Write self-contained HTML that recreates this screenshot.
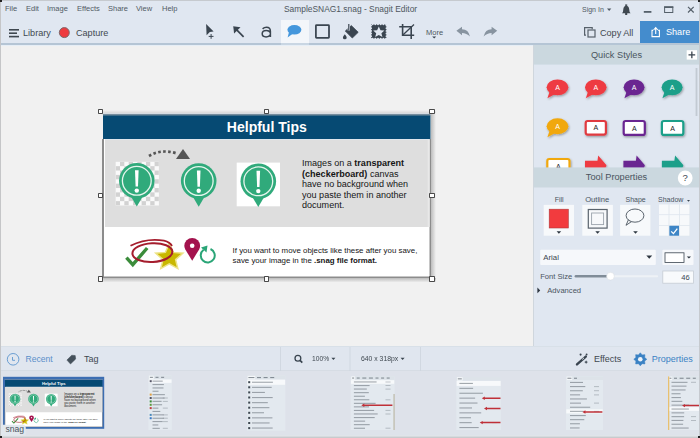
<!DOCTYPE html>
<html><head><meta charset="utf-8">
<style>
*{margin:0;padding:0;box-sizing:border-box}
html,body{width:700px;height:438px;overflow:hidden;background:#f1f1f1;font-family:"Liberation Sans",sans-serif;color:#3d4650}
.a{position:absolute}
.t{position:absolute;white-space:nowrap;line-height:1}
#top{left:0;top:0;width:700px;height:45px;background:#e0e7f1;border-bottom:2px solid #b5c5d5}
.menu{font-size:7.5px;color:#505a64;top:5px}
#canvas{left:0;top:45px;width:533px;height:301px;background:#f1f1f1;border-top:1px solid #e6eef6}
#panel{left:533px;top:45px;width:167px;height:301px;background:#e0e7f1;border-left:1px solid #cfd6dd}
#tray{left:0;top:346px;width:700px;height:25px;background:#e0e6ef;border-top:1px solid #d8e0e8;border-bottom:1px solid #d6dce4}
#thumbs{left:0;top:371px;width:700px;height:67px;background:#dee2ea}
.handle{position:absolute;width:5.6px;height:5.6px;background:#fff;border:1px solid #4a4a4a;border-radius:0.8px}
</style></head><body>
<div id="top" class="a">
  <div class="a" style="left:0;top:0;width:700px;height:1px;background:#c6cacf"></div>
  <span class="t menu" style="left:5px">File</span>
  <span class="t menu" style="left:26px">Edit</span>
  <span class="t menu" style="left:47px">Image</span>
  <span class="t menu" style="left:77px">Effects</span>
  <span class="t menu" style="left:108px">Share</span>
  <span class="t menu" style="left:136px">View</span>
  <span class="t menu" style="left:162px">Help</span>
  <span class="t" style="left:284px;top:5px;font-size:8.42px;color:#4e5760">SampleSNAG1.snag - Snagit Editor</span>
  <span class="t" style="left:582px;top:6px;font-size:7px;color:#505a64">Sign In</span>
  <div class="a" style="left:280.5px;top:19.5px;width:28.5px;height:25.5px;background:#f3f6fa"></div>
  <div class="a" style="left:640px;top:21px;width:60px;height:22px;background:#448ccd"></div>
  <div class="a" style="left:280.5px;top:43px;width:28.5px;height:2px;background:#c9d6e3"></div>
  <span class="t" style="left:23px;top:29px;font-size:9.1px;color:#3f4850">Library</span>
  <span class="t" style="left:76px;top:29px;font-size:9.1px;color:#3f4850">Capture</span>
  <span class="t" style="left:600px;top:29px;font-size:9.1px;color:#3f4850">Copy All</span>
  <span class="t" style="left:666px;top:28px;font-size:9.1px;color:#fff">Share</span>
  <span class="t" style="left:426px;top:29px;font-size:7.5px;color:#4e5760">More</span>
  <svg class="a" style="left:0;top:0" width="700" height="44" viewBox="0 0 700 44">
    <g fill="#3f4850">
      <rect x="9" y="29" width="10" height="1.6"/><rect x="9" y="32.4" width="8" height="1.6"/><rect x="9" y="35.8" width="10" height="1.6"/>
    </g>
    <circle cx="64.3" cy="32.6" r="5" fill="#ee3b3f" stroke="#7c6a6c" stroke-width="1"/>
    <!-- select -->
    <path d="M206.1 24.1 L213.6 31.5 L209.8 32 L206.6 35.2 Z" fill="#3a4550"/>
    <path d="M211.1 34 v4.8 M208.7 36.4 h4.8" stroke="#3a4550" stroke-width="1"/>
    <!-- arrow -->
    <path d="M243.6 36.8 L235 28.2" stroke="#3a4550" stroke-width="1.7"/>
    <path d="M233.2 26.3 L240.5 27.2 L234.1 33.6 Z" fill="#3a4550"/>
    <!-- a -->
    <path d="M262.6 28.9 Q264.3 27.2 266.5 27.2 Q270.4 27.2 270.4 31.2 V37 M270.4 32.6 Q269.2 30.6 266.3 30.6 Q262.2 30.6 262.2 33.8 Q262.2 36.9 266.1 36.9 Q269 36.9 270.4 34.6" fill="none" stroke="#3a4550" stroke-width="1.5"/>
    <!-- bubble -->
    <ellipse cx="294.4" cy="29.8" rx="7" ry="4.8" fill="#4597dc"/>
    <path d="M289 32 L287.6 37.6 L293 33.5 Z" fill="#4597dc"/>
    <!-- rect -->
    <rect x="315.9" y="25.1" width="13.1" height="12.8" rx="0.6" fill="none" stroke="#3a4550" stroke-width="1.75"/>
    <!-- bucket -->
    <path d="M351.3 25.6 L358.2 32.3 L352.3 38 L345.3 31 Z" fill="#3a4550" stroke="#3a4550" stroke-width="0.8" stroke-linejoin="round"/>
    <path d="M348.8 24 V30.5" stroke="#e0e7f1" stroke-width="2.4"/>
    <path d="M348.8 24 V30.5" stroke="#3a4550" stroke-width="1.2"/>
    <path d="M344.8 34.2 Q342.8 36.6 342.9 37.4 A1.9 1.9 0 0 0 346.7 37.4 Q346.8 36.6 344.8 34.2 Z" fill="#3a4550"/>
    <!-- stamp -->
    <rect x="371.1" y="24.3" width="15.4" height="14.4" fill="#3a4550"/>
    <g fill="#e0e7f1"><circle cx="372.6" cy="24.3" r="0.95"/><circle cx="372.6" cy="38.7" r="0.95"/><circle cx="375.3" cy="24.3" r="0.95"/><circle cx="375.3" cy="38.7" r="0.95"/><circle cx="378.0" cy="24.3" r="0.95"/><circle cx="378.0" cy="38.7" r="0.95"/><circle cx="380.7" cy="24.3" r="0.95"/><circle cx="380.7" cy="38.7" r="0.95"/><circle cx="383.4" cy="24.3" r="0.95"/><circle cx="383.4" cy="38.7" r="0.95"/><circle cx="386.1" cy="24.3" r="0.95"/><circle cx="386.1" cy="38.7" r="0.95"/><circle cx="371.1" cy="25.6" r="0.95"/><circle cx="386.5" cy="25.6" r="0.95"/><circle cx="371.1" cy="28.2" r="0.95"/><circle cx="386.5" cy="28.2" r="0.95"/><circle cx="371.1" cy="30.9" r="0.95"/><circle cx="386.5" cy="30.9" r="0.95"/><circle cx="371.1" cy="33.5" r="0.95"/><circle cx="386.5" cy="33.5" r="0.95"/><circle cx="371.1" cy="36.2" r="0.95"/><circle cx="386.5" cy="36.2" r="0.95"/><circle cx="371.1" cy="38.9" r="0.95"/><circle cx="386.5" cy="38.9" r="0.95"/></g>
    <path d="M378.8 26.6 L380.5 30.3 L384.4 30.6 L381.4 33.2 L382.4 37 L378.8 35 L375.2 37 L376.2 33.2 L373.2 30.6 L377.1 30.3 Z" fill="#e0e7f1"/>
    <!-- crop -->
    <path d="M402.6 24 V35.3 H414.2 M399.2 26.8 H411.2 V39" fill="none" stroke="#3a4550" stroke-width="1.6"/>
    <path d="M402.6 35.3 L414 24.5" stroke="#3a4550" stroke-width="1.3"/>
    <path d="M432.2 36.4 h4 l-2 2 z" fill="#3a4550"/>
    <!-- undo / redo -->
    <path d="M456.4 30.8 L462 26.8 L462 29.2 Q468.5 29.2 470 36.6 Q466.5 33 462 33 L462 35.2 Z" fill="#8894a0"/>
    <path d="M497.2 30.8 L491.6 26.8 L491.6 29.2 Q485.1 29.2 483.6 36.6 Q487.1 33 491.6 33 L491.6 35.2 Z" fill="#8894a0"/>
    <!-- sign in arrow -->
    <path d="M607 8.6 h4.3 l-2.15 2.3 z" fill="#505a64"/>
    <!-- bell -->
    <path d="M622 13.2 Q623.3 12 623.3 9.2 Q623.6 5.8 626.2 5.4 Q628.9 5.8 629.2 9.2 Q629.2 12 630.6 13.2 Z" fill="#3f4850"/>
    <rect x="625.2" y="4.4" width="2" height="1.5" fill="#3f4850"/>
    <circle cx="626.2" cy="13.9" r="1.2" fill="#3f4850"/>
    <!-- window controls -->
    <rect x="643.8" y="11" width="7.6" height="1.8" fill="#55606a"/>
    <rect x="664.6" y="6.9" width="8.2" height="5.6" fill="none" stroke="#55606a" stroke-width="1"/>
    <rect x="664.1" y="6.4" width="9.2" height="1.6" fill="#55606a"/>
    <path d="M688 6.9 L693.7 12.5 M693.7 6.9 L688 12.5" stroke="#55606a" stroke-width="1.2"/>
    <!-- copy icon -->
    <path d="M586 35.2 H584.6 V27.6 H592.2 V29.2" fill="none" stroke="#57616b" stroke-width="1.2"/>
    <rect x="588" y="30" width="7" height="7" fill="none" stroke="#57616b" stroke-width="1.2"/>
    <!-- share icon -->
    <path d="M653.2 30.4 H652 V36.6 H659.4 V30.4 H658.2" fill="none" stroke="#fff" stroke-width="1.1"/>
    <path d="M655.7 34 V28 M653.6 30 L655.7 27.6 L657.8 30" fill="none" stroke="#fff" stroke-width="1.1"/>
  </svg>
</div>
<div id="canvas" class="a">
  <svg class="a" style="left:0;top:-46px" width="533" height="346" viewBox="0 0 533 346">
    <defs>
      <linearGradient id="shR" x1="0" x2="1" y1="0" y2="0"><stop offset="0" stop-color="#000" stop-opacity="0.22"/><stop offset="1" stop-color="#000" stop-opacity="0"/></linearGradient>
      <linearGradient id="shB" x1="0" x2="0" y1="0" y2="1"><stop offset="0" stop-color="#000" stop-opacity="0.22"/><stop offset="1" stop-color="#000" stop-opacity="0"/></linearGradient>
      <clipPath id="chk"><rect x="115.7" y="161.8" width="43.2" height="43.7"/></clipPath>
    </defs>
    <linearGradient id="shT" x1="0" x2="0" y1="0" y2="1"><stop offset="0" stop-color="#000" stop-opacity="0"/><stop offset="1" stop-color="#000" stop-opacity="0.1"/></linearGradient>
    <rect x="431" y="114" width="5" height="166" fill="url(#shR)"/>
    <rect x="102" y="278" width="334" height="4.5" fill="url(#shB)"/>
    <rect x="98" y="110" width="338" height="3" fill="url(#shT)"/>
    <g id="snagimg">
    <rect x="102" y="139" width="329" height="139" fill="#8c8c8c"/>
    <rect x="104" y="139" width="325.5" height="137.5" fill="#ffffff"/>
    <rect x="102" y="113" width="329" height="1.5" fill="#d6dce2"/>
    <rect x="103" y="114.5" width="327.5" height="1" fill="#0b3452"/>
    <rect x="103" y="115.5" width="327.5" height="23.5" fill="#064a73"/>
    <rect x="105" y="139" width="324.5" height="1" fill="#dfe6ec"/>
    <rect x="105" y="140" width="324.5" height="87" fill="#dedede"/>
    <rect x="427.7" y="140" width="1.8" height="87" fill="#e8e8e8"/>
    <text x="266.8" y="132" text-anchor="middle" font-family="Liberation Sans" font-weight="bold" font-size="14" fill="#fff">Helpful Tips</text>
    <rect x="115.7" y="161.8" width="43.2" height="43.7" fill="#fafafa"/>
    <g clip-path="url(#chk)"><rect x="115.70" y="166.17" width="4.32" height="4.37" fill="#d2d2d2"/><rect x="115.70" y="174.91" width="4.32" height="4.37" fill="#d2d2d2"/><rect x="115.70" y="183.65" width="4.32" height="4.37" fill="#d2d2d2"/><rect x="115.70" y="192.39" width="4.32" height="4.37" fill="#d2d2d2"/><rect x="115.70" y="201.13" width="4.32" height="4.37" fill="#d2d2d2"/><rect x="120.02" y="161.80" width="4.32" height="4.37" fill="#d2d2d2"/><rect x="120.02" y="170.54" width="4.32" height="4.37" fill="#d2d2d2"/><rect x="120.02" y="179.28" width="4.32" height="4.37" fill="#d2d2d2"/><rect x="120.02" y="188.02" width="4.32" height="4.37" fill="#d2d2d2"/><rect x="120.02" y="196.76" width="4.32" height="4.37" fill="#d2d2d2"/><rect x="124.34" y="166.17" width="4.32" height="4.37" fill="#d2d2d2"/><rect x="124.34" y="174.91" width="4.32" height="4.37" fill="#d2d2d2"/><rect x="124.34" y="183.65" width="4.32" height="4.37" fill="#d2d2d2"/><rect x="124.34" y="192.39" width="4.32" height="4.37" fill="#d2d2d2"/><rect x="124.34" y="201.13" width="4.32" height="4.37" fill="#d2d2d2"/><rect x="128.66" y="161.80" width="4.32" height="4.37" fill="#d2d2d2"/><rect x="128.66" y="170.54" width="4.32" height="4.37" fill="#d2d2d2"/><rect x="128.66" y="179.28" width="4.32" height="4.37" fill="#d2d2d2"/><rect x="128.66" y="188.02" width="4.32" height="4.37" fill="#d2d2d2"/><rect x="128.66" y="196.76" width="4.32" height="4.37" fill="#d2d2d2"/><rect x="132.98" y="166.17" width="4.32" height="4.37" fill="#d2d2d2"/><rect x="132.98" y="174.91" width="4.32" height="4.37" fill="#d2d2d2"/><rect x="132.98" y="183.65" width="4.32" height="4.37" fill="#d2d2d2"/><rect x="132.98" y="192.39" width="4.32" height="4.37" fill="#d2d2d2"/><rect x="132.98" y="201.13" width="4.32" height="4.37" fill="#d2d2d2"/><rect x="137.30" y="161.80" width="4.32" height="4.37" fill="#d2d2d2"/><rect x="137.30" y="170.54" width="4.32" height="4.37" fill="#d2d2d2"/><rect x="137.30" y="179.28" width="4.32" height="4.37" fill="#d2d2d2"/><rect x="137.30" y="188.02" width="4.32" height="4.37" fill="#d2d2d2"/><rect x="137.30" y="196.76" width="4.32" height="4.37" fill="#d2d2d2"/><rect x="141.62" y="166.17" width="4.32" height="4.37" fill="#d2d2d2"/><rect x="141.62" y="174.91" width="4.32" height="4.37" fill="#d2d2d2"/><rect x="141.62" y="183.65" width="4.32" height="4.37" fill="#d2d2d2"/><rect x="141.62" y="192.39" width="4.32" height="4.37" fill="#d2d2d2"/><rect x="141.62" y="201.13" width="4.32" height="4.37" fill="#d2d2d2"/><rect x="145.94" y="161.80" width="4.32" height="4.37" fill="#d2d2d2"/><rect x="145.94" y="170.54" width="4.32" height="4.37" fill="#d2d2d2"/><rect x="145.94" y="179.28" width="4.32" height="4.37" fill="#d2d2d2"/><rect x="145.94" y="188.02" width="4.32" height="4.37" fill="#d2d2d2"/><rect x="145.94" y="196.76" width="4.32" height="4.37" fill="#d2d2d2"/><rect x="150.26" y="166.17" width="4.32" height="4.37" fill="#d2d2d2"/><rect x="150.26" y="174.91" width="4.32" height="4.37" fill="#d2d2d2"/><rect x="150.26" y="183.65" width="4.32" height="4.37" fill="#d2d2d2"/><rect x="150.26" y="192.39" width="4.32" height="4.37" fill="#d2d2d2"/><rect x="150.26" y="201.13" width="4.32" height="4.37" fill="#d2d2d2"/><rect x="154.58" y="161.80" width="4.32" height="4.37" fill="#d2d2d2"/><rect x="154.58" y="170.54" width="4.32" height="4.37" fill="#d2d2d2"/><rect x="154.58" y="179.28" width="4.32" height="4.37" fill="#d2d2d2"/><rect x="154.58" y="188.02" width="4.32" height="4.37" fill="#d2d2d2"/><rect x="154.58" y="196.76" width="4.32" height="4.37" fill="#d2d2d2"/></g>
    <rect x="236.7" y="162.6" width="43.3" height="43.7" fill="#fff"/>
    <g transform="translate(136.8 180.8)">
      <path d="M-6 15.5 L0 25.8 L6 15.5 Z" fill="#30aa7b"/>
      <circle r="17.8" fill="#30aa7b"/>
      <circle r="14.4" fill="none" stroke="#e6f5ed" stroke-width="1.3"/>
      <path d="M-1.8 -10.6 H1.8 L1.2 5.8 H-1.2 Z" fill="#fff"/>
      <circle cy="9.8" r="2.2" fill="#fff"/>
    </g>
    <g transform="translate(198.7 181.0)">
      <path d="M-6 15.5 L0 25.8 L6 15.5 Z" fill="#30aa7b"/>
      <circle r="17.8" fill="#30aa7b"/>
      <circle r="14.4" fill="none" stroke="#e6f5ed" stroke-width="1.3"/>
      <path d="M-1.8 -10.6 H1.8 L1.2 5.8 H-1.2 Z" fill="#fff"/>
      <circle cy="9.8" r="2.2" fill="#fff"/>
    </g>
    <g transform="translate(258.3 181.3)">
      <path d="M-6 15.5 L0 25.8 L6 15.5 Z" fill="#30aa7b"/>
      <circle r="17.8" fill="#30aa7b"/>
      <circle r="14.4" fill="none" stroke="#e6f5ed" stroke-width="1.3"/>
      <path d="M-1.8 -10.6 H1.8 L1.2 5.8 H-1.2 Z" fill="#fff"/>
      <circle cy="9.8" r="2.2" fill="#fff"/>
    </g>
    <path d="M149 156 Q161 148.5 177 153.5" fill="none" stroke="#555" stroke-width="2.7" stroke-dasharray="2.6 2.4"/>
    <path d="M176 159 L183 149 L190 159 Z" fill="#555"/>
    <text font-family="Liberation Sans" font-size="9.05" fill="#161616">
      <tspan x="302" y="166">Images on a <tspan font-weight="bold">transparent</tspan></tspan>
      <tspan x="302" y="176.6"><tspan font-weight="bold">(checkerboard)</tspan> canvas</tspan>
      <tspan x="302" y="187.2">have no background when</tspan>
      <tspan x="302" y="197.8">you paste them in another</tspan>
      <tspan x="302" y="208.4">document.</tspan>
    </text>
    <text font-family="Liberation Sans" font-size="7.88" fill="#161616">
      <tspan x="232.6" y="253">If you want to move objects like these after you save,</tspan>
      <tspan x="232.6" y="262.6">save your image in the <tspan font-weight="bold">.snag file format.</tspan></tspan>
    </text>
    <!-- star -->
    <path d="M169.3 243.6 L173.2 252.4 L182.9 253.2 L175.6 259.6 L177.8 268.6 L169.3 263.8 L160.8 268.6 L163 259.6 L155.7 253.2 L165.4 252.4 Z" fill="#c9b800" stroke="#ede488" stroke-width="1.5"/>
    <!-- check -->
    <path d="M126.4 257.6 L132.8 264.6 L147.2 248" fill="none" stroke="#3b8c3b" stroke-width="3.4"/>
    <!-- red ellipse -->
    <ellipse cx="152.4" cy="252.6" rx="20" ry="9.4" transform="rotate(-3 152.4 252.6)" fill="none" stroke="#a51d2d" stroke-width="2"/>
    <path d="M130.5 245.8 Q146 237.8 164 240.6 Q170 242 172 246" fill="none" stroke="#a51d2d" stroke-width="1.8"/>
    <!-- magenta pin -->
    <path d="M192.2 260.7 L185.3 249.5 Q184.3 247.5 184.3 245.8 A7.9 7.9 0 0 1 200.1 245.8 Q200.1 247.5 199.1 249.5 Z" fill="#a3124d"/>
    <circle cx="192.2" cy="245.7" r="2.3" fill="#fff"/>
    <!-- refresh -->
    <path d="M203.6 249.8 A7 7 0 1 0 210.5 249" fill="none" stroke="#2aa577" stroke-width="2"/>
    <path d="M201 247.5 L207.5 245.5 L206.5 252.5 Z" fill="#2aa577"/></g>
  </svg>
  <div class="handle" style="left:97.5px;top:62.6px"></div>
  <div class="handle" style="left:263.5px;top:62.6px"></div>
  <div class="handle" style="left:429.0px;top:62.6px"></div>
  <div class="handle" style="left:97.5px;top:146.6px"></div>
  <div class="handle" style="left:429.0px;top:146.6px"></div>
  <div class="handle" style="left:97.5px;top:230.1px"></div>
  <div class="handle" style="left:263.5px;top:230.1px"></div>
  <div class="handle" style="left:429.0px;top:230.1px"></div>
</div>
<div id="panel" class="a"></div>
<div id="tray" class="a">
  <span class="t" style="left:25.5px;top:8.3px;font-size:8.6px;color:#5a8fca">Recent</span>
  <span class="t" style="left:84px;top:8.3px;font-size:9px;color:#3f4850">Tag</span>
  <span class="t" style="left:311.8px;top:8.3px;font-size:7.6px;color:#3f4850;transform:scaleX(0.88);transform-origin:0 0">100%</span>
  <span class="t" style="left:361px;top:8.3px;font-size:7.6px;color:#3f4850;transform:scaleX(0.9);transform-origin:0 0">640 x 318px</span>
  <span class="t" style="left:594px;top:8.3px;font-size:9px;color:#3f4850">Effects</span>
  <span class="t" style="left:651.8px;top:8.3px;font-size:9px;color:#3b82c4">Properties</span>
</div>
<div id="thumbs" class="a"></div>
<div class="a" style="left:0;top:0;width:1px;height:438px;background:#c5c6c8;z-index:5"></div><div class="a" style="left:699px;top:0;width:1px;height:438px;background:#c6cacf;z-index:5"></div><div class="a" style="left:0;top:0;width:2px;height:2px;background:#222;z-index:6"></div><div class="a" style="left:698px;top:0;width:2px;height:2px;background:#222;z-index:6"></div><div class="a" style="left:0;top:436px;width:2px;height:2px;background:#222;z-index:6"></div><div class="a" style="left:698px;top:436px;width:2px;height:2px;background:#222;z-index:6"></div>
<svg class="a" style="left:0;top:0" width="700" height="438" viewBox="0 0 700 438">
  <rect x="3" y="376.8" width="101.2" height="52" fill="#3d6eb2"/>
  <g transform="translate(5.3 379.6) scale(0.2975 0.289) translate(-104 -114)"><use href="#snagimg"/></g>
  <path d="M0 424.8 H22.5 Q25.8 424.8 25.8 428 V436 H0 Z" fill="#e2e8ee"/>
  <text x="5.4" y="431.6" font-family="Liberation Sans" font-size="8.6" fill="#4a545e">snag</text>
  <!-- T2 --><rect x="148.5" y="375.5" width="23.3" height="54.5" fill="#e3e9ef"/><rect x="148.5" y="375.5" width="23.3" height="3.6" fill="#dde3e9"/><rect x="149.1" y="375.7" width="4.6" height="3.4" fill="#f6f8fa"/><rect x="149.9" y="376.8" width="3.0" height="1.1" fill="#5d6670" opacity="0.7"/><rect x="155.5" y="376.8" width="3.0" height="1.1" fill="#5d6670" opacity="0.7"/><rect x="161.1" y="376.8" width="3.0" height="1.1" fill="#5d6670" opacity="0.7"/><rect x="148.8" y="379.5" width="22.7" height="3.4" fill="#f7f9fb"/><rect x="152.5" y="380.6" width="10.2" height="1.1" fill="#6a737c" opacity="0.6"/><rect x="149.7" y="380.2" width="2" height="2" fill="#556"/><rect x="152.5" y="384.0" width="11.4" height="1.1" fill="#6a737c" opacity="0.6"/><rect x="152.5" y="387.4" width="11.0" height="1.1" fill="#6a737c" opacity="0.6"/><rect x="152.5" y="390.7" width="6.0" height="1.1" fill="#6a737c" opacity="0.6"/><rect x="152.5" y="394.1" width="12.4" height="1.1" fill="#6a737c" opacity="0.6"/><rect x="149.7" y="393.6" width="2" height="2" fill="#e0a040"/><rect x="152.5" y="397.5" width="12.1" height="1.1" fill="#6a737c" opacity="0.6"/><rect x="149.7" y="397.0" width="2" height="2" fill="#556"/><rect x="162.8" y="397.5" width="5" height="1" fill="#7a838c" opacity="0.45"/><rect x="152.5" y="400.8" width="9.1" height="1.1" fill="#6a737c" opacity="0.6"/><rect x="149.7" y="400.4" width="2" height="2" fill="#3a8a3a"/><rect x="162.8" y="400.9" width="5" height="1" fill="#7a838c" opacity="0.45"/><rect x="152.5" y="404.2" width="9.6" height="1.1" fill="#6a737c" opacity="0.6"/><rect x="149.7" y="403.8" width="2" height="2" fill="#5a9a3a"/><rect x="152.5" y="407.6" width="5.9" height="1.1" fill="#6a737c" opacity="0.6"/><rect x="149.7" y="407.1" width="2" height="2" fill="#c04040"/><rect x="162.8" y="407.6" width="5" height="1" fill="#7a838c" opacity="0.45"/><rect x="152.5" y="410.9" width="7.8" height="1.1" fill="#6a737c" opacity="0.6"/><rect x="152.5" y="414.3" width="11.2" height="1.1" fill="#6a737c" opacity="0.6"/><rect x="149.7" y="413.9" width="2" height="2" fill="#4a8aba"/><rect x="162.8" y="414.4" width="5" height="1" fill="#7a838c" opacity="0.45"/><rect x="152.5" y="417.7" width="11.4" height="1.1" fill="#6a737c" opacity="0.6"/><rect x="149.7" y="417.2" width="2" height="2" fill="#3a7ac8"/><rect x="162.8" y="417.7" width="5" height="1" fill="#7a838c" opacity="0.45"/><rect x="152.5" y="421.0" width="10.1" height="1.1" fill="#6a737c" opacity="0.6"/><rect x="162.8" y="421.1" width="5" height="1" fill="#7a838c" opacity="0.45"/><rect x="152.5" y="424.4" width="5.8" height="1.1" fill="#6a737c" opacity="0.6"/><rect x="152.5" y="427.8" width="7.3" height="1.1" fill="#6a737c" opacity="0.6"/><rect x="162.8" y="427.8" width="5" height="1" fill="#7a838c" opacity="0.45"/>
  <!-- T3 --><rect x="247" y="375.7" width="38.4" height="54.9" fill="#e3e9ef"/><rect x="247" y="375.7" width="38.4" height="3.6" fill="#dde3e9"/><rect x="247.6" y="375.9" width="7.6" height="3.4" fill="#f6f8fa"/><rect x="248.4" y="377.0" width="6.0" height="1.1" fill="#5d6670" opacity="0.7"/><rect x="257.0" y="377.0" width="4.0" height="1.1" fill="#5d6670" opacity="0.7"/><rect x="263.6" y="377.0" width="4.0" height="1.1" fill="#5d6670" opacity="0.7"/><rect x="270.2" y="377.0" width="4.0" height="1.1" fill="#5d6670" opacity="0.7"/><rect x="247.3" y="379.7" width="37.8" height="5.1" fill="#f7f9fb"/><rect x="252.0" y="381.7" width="20.9" height="1.1" fill="#6a737c" opacity="0.6"/><rect x="248.2" y="381.2" width="2" height="2" fill="#3d4750"/><rect x="252.0" y="386.8" width="19.7" height="1.1" fill="#6a737c" opacity="0.6"/><rect x="248.2" y="386.3" width="2" height="2" fill="#3d4750"/><rect x="252.0" y="391.9" width="12.9" height="1.1" fill="#6a737c" opacity="0.6"/><rect x="248.2" y="391.4" width="2" height="2" fill="#3d4750"/><rect x="252.0" y="397.0" width="20.7" height="1.1" fill="#6a737c" opacity="0.6"/><rect x="248.2" y="396.5" width="2" height="2" fill="#3d4750"/><rect x="252.0" y="402.1" width="15.8" height="1.1" fill="#6a737c" opacity="0.6"/><rect x="248.2" y="401.6" width="2" height="2" fill="#3d4750"/><rect x="252.0" y="407.1" width="17.4" height="1.1" fill="#6a737c" opacity="0.6"/><rect x="248.2" y="406.7" width="2" height="2" fill="#3d4750"/><rect x="252.0" y="412.2" width="12.0" height="1.1" fill="#6a737c" opacity="0.6"/><rect x="248.2" y="411.8" width="2" height="2" fill="#3d4750"/><rect x="252.0" y="417.3" width="20.4" height="1.1" fill="#6a737c" opacity="0.6"/><rect x="248.2" y="416.9" width="2" height="2" fill="#3d4750"/><rect x="252.0" y="422.4" width="17.6" height="1.1" fill="#6a737c" opacity="0.6"/><rect x="248.2" y="422.0" width="2" height="2" fill="#3d4750"/><rect x="252.0" y="427.5" width="20.7" height="1.1" fill="#6a737c" opacity="0.6"/><rect x="248.2" y="427.1" width="2" height="2" fill="#3d4750"/>
  <!-- T4 --><rect x="350.7" y="376.2" width="43.8" height="53.8" fill="#e3e9ef"/><rect x="350.7" y="376.2" width="43.8" height="3.6" fill="#dde3e9"/><rect x="351.3" y="376.4" width="3.6" height="3.4" fill="#f6f8fa"/><rect x="352.1" y="377.5" width="2.0" height="1.1" fill="#5d6670" opacity="0.7"/><rect x="356.7" y="377.5" width="3.0" height="1.1" fill="#5d6670" opacity="0.7"/><rect x="362.3" y="377.5" width="4.0" height="1.1" fill="#5d6670" opacity="0.7"/><rect x="368.9" y="377.5" width="4.0" height="1.1" fill="#5d6670" opacity="0.7"/><rect x="375.5" y="377.5" width="3.0" height="1.1" fill="#5d6670" opacity="0.7"/><rect x="381.1" y="377.5" width="3.0" height="1.1" fill="#5d6670" opacity="0.7"/><rect x="386.7" y="377.5" width="3.0" height="1.1" fill="#5d6670" opacity="0.7"/><rect x="351.0" y="380.2" width="43.2" height="3.6" fill="#f7f9fb"/><rect x="353.9" y="381.4" width="22.7" height="1.1" fill="#6a737c" opacity="0.6"/><rect x="385.5" y="381.5" width="5" height="1" fill="#7a838c" opacity="0.45"/><rect x="353.9" y="385.0" width="15.7" height="1.1" fill="#6a737c" opacity="0.6"/><rect x="385.5" y="385.0" width="5" height="1" fill="#7a838c" opacity="0.45"/><rect x="353.9" y="388.5" width="12.9" height="1.1" fill="#6a737c" opacity="0.6"/><rect x="385.5" y="388.6" width="5" height="1" fill="#7a838c" opacity="0.45"/><rect x="353.9" y="392.1" width="14.9" height="1.1" fill="#6a737c" opacity="0.6"/><rect x="353.9" y="395.7" width="11.0" height="1.1" fill="#6a737c" opacity="0.6"/><rect x="353.9" y="399.2" width="15.4" height="1.1" fill="#6a737c" opacity="0.6"/><rect x="385.5" y="399.3" width="5" height="1" fill="#7a838c" opacity="0.45"/><rect x="353.9" y="402.8" width="21.7" height="1.1" fill="#6a737c" opacity="0.6"/><rect x="353.9" y="406.3" width="15.1" height="1.1" fill="#6a737c" opacity="0.6"/><rect x="353.9" y="409.9" width="20.2" height="1.1" fill="#6a737c" opacity="0.6"/><rect x="385.5" y="409.9" width="5" height="1" fill="#7a838c" opacity="0.45"/><rect x="353.9" y="413.4" width="23.8" height="1.1" fill="#6a737c" opacity="0.6"/><rect x="385.5" y="413.5" width="5" height="1" fill="#7a838c" opacity="0.45"/><rect x="353.9" y="417.0" width="20.8" height="1.1" fill="#6a737c" opacity="0.6"/><rect x="353.9" y="420.6" width="11.2" height="1.1" fill="#6a737c" opacity="0.6"/><rect x="353.9" y="424.1" width="15.8" height="1.1" fill="#6a737c" opacity="0.6"/><rect x="353.9" y="427.7" width="11.1" height="1.1" fill="#6a737c" opacity="0.6"/><rect x="385.5" y="427.7" width="5" height="1" fill="#7a838c" opacity="0.45"/><rect x="393.6" y="394" width="0.9" height="36" fill="#b0a890"/><path d="M361.3 405.2 L364.3 403.5 V404.45 H392.4 V405.95 H364.3 V406.9 Z" fill="#bf3038"/>
  <!-- T5 --><rect x="456.4" y="377" width="44.5" height="53.0" fill="#e3e9ef"/><rect x="456.4" y="377" width="44.5" height="3.6" fill="#dde3e9"/><rect x="457.0" y="377.2" width="5.6" height="3.4" fill="#f6f8fa"/><rect x="457.8" y="378.3" width="4.0" height="1.1" fill="#5d6670" opacity="0.7"/><rect x="456.7" y="381.0" width="43.9" height="4.9" fill="#f7f9fb"/><rect x="459.4" y="382.9" width="13.5" height="1.1" fill="#6a737c" opacity="0.6"/><rect x="459.4" y="387.8" width="13.7" height="1.1" fill="#6a737c" opacity="0.6"/><rect x="459.4" y="392.7" width="23.5" height="1.1" fill="#6a737c" opacity="0.6"/><rect x="459.4" y="397.6" width="15.7" height="1.1" fill="#6a737c" opacity="0.6"/><rect x="459.4" y="402.5" width="18.1" height="1.1" fill="#6a737c" opacity="0.6"/><rect x="459.4" y="407.4" width="12.6" height="1.1" fill="#6a737c" opacity="0.6"/><rect x="459.4" y="412.3" width="21.8" height="1.1" fill="#6a737c" opacity="0.6"/><rect x="459.4" y="417.2" width="11.6" height="1.1" fill="#6a737c" opacity="0.6"/><rect x="459.4" y="422.1" width="12.3" height="1.1" fill="#6a737c" opacity="0.6"/><rect x="491.9" y="422.1" width="5" height="1" fill="#7a838c" opacity="0.45"/><rect x="459.4" y="427.0" width="19.3" height="1.1" fill="#6a737c" opacity="0.6"/><path d="M481.8 398.2 L484.8 396.5 V397.45 H500.5 V398.95 H484.8 V399.9 Z" fill="#bf3038"/><path d="M484 408.5 L487 406.8 V407.75 H500.5 V409.25 H487 V410.2 Z" fill="#bf3038"/><path d="M479.7 422.6 L482.7 420.90000000000003 V421.85 H500.5 V423.35 H482.7 V424.3 Z" fill="#bf3038"/>
  <!-- T6 --><rect x="566" y="376.4" width="37.0" height="53.6" fill="#e3e9ef"/><rect x="566" y="376.4" width="37.0" height="3.6" fill="#dde3e9"/><rect x="566.6" y="376.6" width="5.6" height="3.4" fill="#f6f8fa"/><rect x="567.4" y="377.7" width="4.0" height="1.1" fill="#5d6670" opacity="0.7"/><rect x="574.0" y="377.7" width="3.0" height="1.1" fill="#5d6670" opacity="0.7"/><rect x="570.0" y="381.9" width="13.0" height="1.1" fill="#6a737c" opacity="0.6"/><rect x="570.0" y="386.0" width="15.3" height="1.1" fill="#6a737c" opacity="0.6"/><rect x="594.0" y="386.1" width="5" height="1" fill="#7a838c" opacity="0.45"/><rect x="570.0" y="390.2" width="12.8" height="1.1" fill="#6a737c" opacity="0.6"/><rect x="594.0" y="390.2" width="5" height="1" fill="#7a838c" opacity="0.45"/><rect x="570.0" y="394.3" width="10.1" height="1.1" fill="#6a737c" opacity="0.6"/><rect x="594.0" y="394.4" width="5" height="1" fill="#7a838c" opacity="0.45"/><rect x="570.0" y="398.4" width="16.9" height="1.1" fill="#6a737c" opacity="0.6"/><rect x="570.0" y="402.6" width="11.0" height="1.1" fill="#6a737c" opacity="0.6"/><rect x="594.0" y="402.6" width="5" height="1" fill="#7a838c" opacity="0.45"/><rect x="570.0" y="406.7" width="20.2" height="1.1" fill="#6a737c" opacity="0.6"/><rect x="566.3" y="409.3" width="36.4" height="4.1" fill="#f7f9fb"/><rect x="570.0" y="410.8" width="13.8" height="1.1" fill="#6a737c" opacity="0.6"/><rect x="594.0" y="410.9" width="5" height="1" fill="#7a838c" opacity="0.45"/><rect x="570.0" y="415.0" width="15.8" height="1.1" fill="#6a737c" opacity="0.6"/><rect x="570.0" y="419.1" width="14.3" height="1.1" fill="#6a737c" opacity="0.6"/><rect x="570.0" y="423.2" width="9.9" height="1.1" fill="#6a737c" opacity="0.6"/><rect x="570.0" y="427.4" width="9.6" height="1.1" fill="#6a737c" opacity="0.6"/><path d="M582.4 412 L585.4 410.3 V411.25 H602.4 V412.75 H585.4 V413.7 Z" fill="#bf3038"/>
  <!-- T7 --><rect x="668" y="376.4" width="32.0" height="53.6" fill="#e3e9ef"/><rect x="668" y="376.4" width="32.0" height="3.6" fill="#dde3e9"/><rect x="668.6" y="376.6" width="3.6" height="3.4" fill="#f6f8fa"/><rect x="669.4" y="377.7" width="2.0" height="1.1" fill="#5d6670" opacity="0.7"/><rect x="674.0" y="377.7" width="3.0" height="1.1" fill="#5d6670" opacity="0.7"/><rect x="679.6" y="377.7" width="4.0" height="1.1" fill="#5d6670" opacity="0.7"/><rect x="686.2" y="377.7" width="4.0" height="1.1" fill="#5d6670" opacity="0.7"/><rect x="692.8" y="377.7" width="3.0" height="1.1" fill="#5d6670" opacity="0.7"/><rect x="671.5" y="381.8" width="16.0" height="1.1" fill="#6a737c" opacity="0.6"/><rect x="691.0" y="381.8" width="5" height="1" fill="#7a838c" opacity="0.45"/><rect x="671.5" y="385.6" width="15.0" height="1.1" fill="#6a737c" opacity="0.6"/><rect x="671.5" y="389.4" width="14.1" height="1.1" fill="#6a737c" opacity="0.6"/><rect x="671.5" y="393.2" width="9.0" height="1.1" fill="#6a737c" opacity="0.6"/><rect x="671.5" y="397.0" width="9.4" height="1.1" fill="#6a737c" opacity="0.6"/><rect x="671.5" y="400.8" width="10.8" height="1.1" fill="#6a737c" opacity="0.6"/><rect x="671.5" y="404.6" width="17.6" height="1.1" fill="#6a737c" opacity="0.6"/><rect x="668.3" y="407.1" width="31.4" height="3.8" fill="#f7f9fb"/><rect x="671.5" y="408.5" width="17.4" height="1.1" fill="#6a737c" opacity="0.6"/><rect x="671.5" y="412.3" width="12.7" height="1.1" fill="#6a737c" opacity="0.6"/><rect x="671.5" y="416.1" width="12.6" height="1.1" fill="#6a737c" opacity="0.6"/><rect x="691.0" y="416.1" width="5" height="1" fill="#7a838c" opacity="0.45"/><rect x="671.5" y="419.9" width="11.9" height="1.1" fill="#6a737c" opacity="0.6"/><rect x="691.0" y="420.0" width="5" height="1" fill="#7a838c" opacity="0.45"/><rect x="671.5" y="423.7" width="11.6" height="1.1" fill="#6a737c" opacity="0.6"/><rect x="671.5" y="427.5" width="17.2" height="1.1" fill="#6a737c" opacity="0.6"/><rect x="668" y="376.4" width="1.3" height="53.6" fill="#e8c070"/><path d="M682 405.6 L685 403.90000000000003 V404.85 H700 V406.35 H685 V407.3 Z" fill="#bf3038"/>
  <rect x="0" y="435.4" width="700" height="1.2" fill="#e2e5e8"/><rect x="0" y="436.6" width="700" height="1.4" fill="#c8cacd"/>
</svg>
<svg class="a" style="left:0;top:0" width="700" height="438" viewBox="0 0 700 438">
  <defs>
    <filter id="ds" x="-30%" y="-30%" width="170%" height="170%"><feDropShadow dx="0.8" dy="1.2" stdDeviation="0.9" flood-color="#000" flood-opacity="0.35"/></filter>
    <clipPath id="qsclip"><rect x="534" y="65" width="166" height="103"/></clipPath>
  </defs>
  <rect x="534" y="45" width="166" height="19.6" fill="#cbd8df"/>
  <text x="616.5" y="57.6" text-anchor="middle" font-family="Liberation Sans" font-size="9.2" fill="#4a545e">Quick Styles</text>
  <rect x="686.7" y="50.2" width="10.3" height="9.4" fill="#fff"/>
  <path d="M691.85 51.6 V58.2 M688.5 54.9 H695.2" stroke="#3a4550" stroke-width="1.3"/>
  <g clip-path="url(#qsclip)"><g filter="url(#ds)"><ellipse cx="557.5" cy="87.35" rx="10.899999999999977" ry="7.949999999999996" fill="#ee3b42"/>
      <path d="M550.1 90.35 L547.4 98.3 L555.6 93.8 Z" fill="#ee3b42"/></g>
      <text x="557.5" y="89.94999999999999" text-anchor="middle" font-family="Liberation Sans" font-size="7" fill="#fff">A</text><g filter="url(#ds)"><ellipse cx="595.8" cy="87.35" rx="10.800000000000011" ry="7.949999999999996" fill="#ee3b42"/>
      <path d="M588.5 90.35 L585.8 98.3 L594 93.8 Z" fill="#ee3b42"/></g>
      <text x="595.8" y="89.94999999999999" text-anchor="middle" font-family="Liberation Sans" font-size="7" fill="#fff">A</text><g filter="url(#ds)"><ellipse cx="634.05" cy="87.35" rx="10.449999999999989" ry="7.949999999999996" fill="#6b2591"/>
      <path d="M627.1 90.35 L624.4 98.3 L632.6 93.8 Z" fill="#6b2591"/></g>
      <text x="634.05" y="89.94999999999999" text-anchor="middle" font-family="Liberation Sans" font-size="7" fill="#fff">A</text><g filter="url(#ds)"><ellipse cx="672.1" cy="87.35" rx="10.5" ry="7.949999999999996" fill="#1c9f89"/>
      <path d="M665.1 90.35 L662.4 98.3 L670.6 93.8 Z" fill="#1c9f89"/></g>
      <text x="672.1" y="89.94999999999999" text-anchor="middle" font-family="Liberation Sans" font-size="7" fill="#fff">A</text><g filter="url(#ds)"><ellipse cx="557.5" cy="126.25" rx="10.899999999999977" ry="7.949999999999996" fill="#f1a80c"/>
      <path d="M550.1 129.25 L547.4 137.2 L555.6 132.7 Z" fill="#f1a80c"/></g>
      <text x="557.5" y="128.85" text-anchor="middle" font-family="Liberation Sans" font-size="7" fill="#fff">A</text><g filter="url(#ds)"><rect x="585.7" y="121" width="20.199999999999932" height="13.599999999999994" rx="2" fill="#fff" stroke="#e03a40" stroke-width="2.2"/></g>
      <text x="595.8" y="130.4" text-anchor="middle" font-family="Liberation Sans" font-size="7" fill="#222">A</text><g filter="url(#ds)"><rect x="623.7" y="121" width="21.09999999999991" height="13.900000000000006" rx="2" fill="#fff" stroke="#6b2591" stroke-width="2.2"/></g>
      <text x="634.25" y="130.55" text-anchor="middle" font-family="Liberation Sans" font-size="7" fill="#222">A</text><g filter="url(#ds)"><rect x="661.9" y="121" width="21.399999999999977" height="13.900000000000006" rx="2" fill="#fff" stroke="#1c9f89" stroke-width="2.2"/></g>
      <text x="672.5999999999999" y="130.55" text-anchor="middle" font-family="Liberation Sans" font-size="7" fill="#222">A</text><g filter="url(#ds)"><rect x="547.3" y="159" width="22.2" height="14" rx="2" fill="#fff" stroke="#f1a80c" stroke-width="2.2"/></g><text x="558.4" y="168.5" text-anchor="middle" font-family="Liberation Sans" font-size="7" fill="#222">A</text><g filter="url(#ds)"><path d="M585.0 160.8 H597.5 L598.2 155.6 L606.5 165.2 L605.5 168 H585.0 Z" fill="#ee3b42"/></g><g filter="url(#ds)"><path d="M623.4 160.8 H635.9 L636.6 155.6 L644.9 165.2 L643.9 168 H623.4 Z" fill="#6b2591"/></g><g filter="url(#ds)"><path d="M661.9 160.8 H674.4 L675.1 155.6 L683.4 165.2 L682.4 168 H661.9 Z" fill="#1c9f89"/></g></g>
  <rect x="695.6" y="68" width="1.8" height="48" fill="#c2cad3"/>
  <rect x="534" y="167.4" width="166" height="20.1" fill="#cbd8df"/>
  <text x="616.5" y="180" text-anchor="middle" font-family="Liberation Sans" font-size="9.2" fill="#4a545e">Tool Properties</text>
  <circle cx="685.2" cy="178" r="7.4" fill="#fff"/>
  <text x="685.2" y="181.4" text-anchor="middle" font-family="Liberation Sans" font-size="9.5" fill="#3a4550">?</text>
  <g font-family="Liberation Sans" font-size="7" fill="#4a545e" text-anchor="middle">
    <text x="559.2" y="202">Fill</text><text x="597.2" y="202" font-size="7.6">Outline</text><text x="635.6" y="202">Shape</text><text x="670.7" y="202">Shadow</text>
  </g>
  <path d="M687 200 h3 l-1.5 1.7 z" fill="#3a4550"/>
  <rect x="543.7" y="204.9" width="30.3" height="30.8" fill="#f7f9fb"/>
  <rect x="549.2" y="209.2" width="19.1" height="18.8" fill="#f23b3e" stroke="#b0383a" stroke-width="0.6"/>
  <path d="M556.6 231.2 h4.6 l-2.3 2.6 z" fill="#2d3640"/>
  <rect x="582.3" y="204.9" width="30.6" height="30.8" fill="#f7f9fb"/>
  <rect x="588.3" y="209.5" width="18.8" height="18.6" fill="none" stroke="#59636d" stroke-width="1.2"/>
  <rect x="591.6" y="213" width="12" height="11.6" fill="none" stroke="#9aa3ab" stroke-width="0.9"/>
  <path d="M595.3 231.2 h4.6 l-2.3 2.6 z" fill="#2d3640"/>
  <rect x="620.1" y="204.9" width="30.3" height="30.8" fill="#f7f9fb"/>
  <ellipse cx="635" cy="215.6" rx="8.9" ry="6.6" fill="none" stroke="#4a545e" stroke-width="0.9"/>
  <path d="M628.5 219.6 L626 225.3 L631.5 221.6" fill="none" stroke="#4a545e" stroke-width="0.9"/>
  <path d="M633.2 231.2 h4.6 l-2.3 2.6 z" fill="#2d3640"/>
  <rect x="659" y="204.3" width="31" height="32" fill="#dfe6ee"/>
  <rect x="659.0" y="204.4" width="9.6" height="9.9" fill="#f7f9fb"/><rect x="659.0" y="215.1" width="9.6" height="9.9" fill="#f7f9fb"/><rect x="659.0" y="225.8" width="9.6" height="9.9" fill="#f7f9fb"/><rect x="669.4" y="204.4" width="9.6" height="9.9" fill="#f7f9fb"/><rect x="669.4" y="215.1" width="9.6" height="9.9" fill="#f7f9fb"/><rect x="669.4" y="225.8" width="9.6" height="9.9" fill="#3d85c6"/><rect x="679.8" y="204.4" width="9.6" height="9.9" fill="#f7f9fb"/><rect x="679.8" y="215.1" width="9.6" height="9.9" fill="#f7f9fb"/><rect x="679.8" y="225.8" width="9.6" height="9.9" fill="#f7f9fb"/>
  <path d="M671.2 231.4 L673.4 233.6 L677.3 228.6" fill="none" stroke="#fff" stroke-width="1.3"/>
  <rect x="540.2" y="249.7" width="115.6" height="15.3" rx="1" fill="#f6f8fb"/>
  <text x="543.3" y="260.3" font-family="Liberation Sans" font-size="7.8" fill="#3a4550">Arial</text>
  <path d="M646.3 255.6 h5.9 l-2.95 3.1 z" fill="#2d3640"/>
  <rect x="662.4" y="249.7" width="31.1" height="15.3" rx="1" fill="#f6f8fb"/>
  <rect x="665" y="252.8" width="19" height="9.7" fill="#fff" stroke="#3a4550" stroke-width="0.8"/>
  <path d="M686.8 256.4 h4.2 l-2.1 2.2 z" fill="#2d3640"/>
  <text x="540.2" y="279" font-family="Liberation Sans" font-size="7.6" fill="#4a545e">Font Size</text>
  <rect x="574.6" y="275.2" width="83.5" height="2" rx="1" fill="#eef2f6"/>
  <rect x="574.6" y="275" width="36" height="2.4" rx="1.2" fill="#808c98"/>
  <circle cx="610.5" cy="276.2" r="3.9" fill="#fff" stroke="#d0d6dc" stroke-width="0.5"/>
  <rect x="662.8" y="271" width="30.7" height="12.2" fill="#f8fafc" stroke="#c5ccd4" stroke-width="0.8"/>
  <text x="689.8" y="280.2" text-anchor="end" font-family="Liberation Sans" font-size="7.6" fill="#3a4550">46</text>
  <path d="M537.4 287.6 L540.2 290.4 L537.4 293.2 Z" fill="#2d3640"/>
  <text x="547.3" y="293" font-family="Liberation Sans" font-size="7.6" fill="#4a545e">Advanced</text>
  <!-- tray icons -->
  <circle cx="13.1" cy="359.3" r="5.8" fill="none" stroke="#6a9ed2" stroke-width="1"/>
  <path d="M12.5 357 V360.3 H15" fill="none" stroke="#6a9ed2" stroke-width="1"/>
  <path d="M66.9 360.1 L71.7 355.2 L75.2 355.5 L75.7 359 L70.5 364 Z" fill="#45515b" stroke="#45515b" stroke-width="0.5" stroke-linejoin="round"/>
  
  <circle cx="297.9" cy="358.3" r="2.9" fill="none" stroke="#3a4550" stroke-width="1.3"/>
  <path d="M300 360.4 L302.3 362.7" stroke="#3a4550" stroke-width="1.7"/>
  <path d="M331.4 357.7 h4 l-2 2.2 z" fill="#3a4550"/>
  <path d="M400.6 357.7 h4 l-2 2.2 z" fill="#3a4550"/>
  <path d="M577 364.4 L585.8 356.6" stroke="#3a4550" stroke-width="2.4" stroke-linecap="round"/>
  <path d="M582.2 359.5 L584 357.9" stroke="#e8eef4" stroke-width="0.9"/>
  <circle cx="580.6" cy="354.6" r="1.05" fill="#3a4550"/>
  <circle cx="586.6" cy="354.5" r="0.95" fill="#3a4550"/>
  <path d="M586.1 360.2 L586.7 361.5 L588 362.1 L586.7 362.7 L586.1 364 L585.5 362.7 L584.2 362.1 L585.5 361.5 Z" fill="#3a4550"/>
  <g transform="translate(640.3 359.3)"><path d="M0.00 -6.50 L1.80 -4.34 L4.60 -4.60 L4.34 -1.80 L6.50 0.00 L4.34 1.80 L4.60 4.60 L1.80 4.34 L0.00 6.50 L-1.80 4.34 L-4.60 4.60 L-4.34 1.80 L-6.50 0.00 L-4.34 -1.80 L-4.60 -4.60 L-1.80 -4.34 Z" fill="#3b82c4" stroke="#3b82c4" stroke-width="0.6" stroke-linejoin="round"/><circle r="4.2" fill="#3b82c4"/><circle r="2.3" fill="#eef3f8"/></g>
  <rect x="280" y="347" width="0.8" height="24" fill="#cdd5de"/>
  <rect x="349.6" y="347" width="0.8" height="24" fill="#cdd5de"/>
  <rect x="420" y="347" width="0.8" height="24" fill="#cdd5de"/>
</svg>

</body></html>
